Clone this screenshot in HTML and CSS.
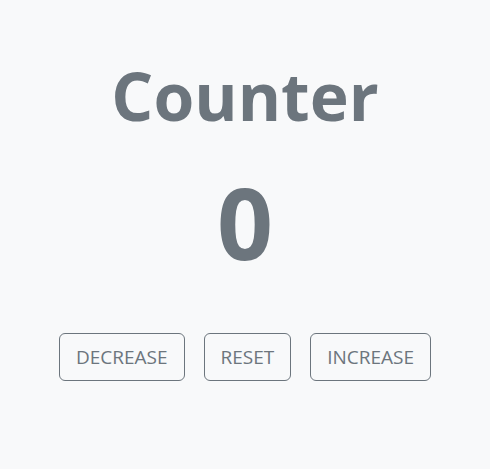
FILE: index.html
```html
<!DOCTYPE html>
<html>
<head>
<meta charset="utf-8">
<link rel="stylesheet" href="styles.css">
</head>
<body>
<main class="counter">
  <h1 class="title">Counter</h1>
  <div class="value">0</div>
  <div class="actions">
    <button class="btn">DECREASE</button>
    <button class="btn">RESET</button>
    <button class="btn">INCREASE</button>
  </div>
</main>
</body>
</html>
```
FILE: styles.css
```css
html, body {
  margin: 0;
  padding: 0;
  background: #f8f9fa;
  height: 100%;
}
body {
  font-family: "Open Sans", "Noto Sans", sans-serif;
  color: #6c757d;
}
.counter {
  display: flex;
  flex-direction: column;
  align-items: center;
  padding-top: 55px;
}
.title {
  margin: 0;
  font-size: 66px;
  font-weight: 700;
  line-height: 80px;
}
.value {
  margin-top: 27px;
  font-size: 98px;
  font-weight: 700;
  line-height: 120px;
}
.actions {
  display: flex;
  gap: 19px;
  margin-top: 51px;
}
.btn {
  font-family: inherit;
  font-size: 19px;
  line-height: 28px;
  padding: 9px 16px;
  color: #6c757d;
  background: transparent;
  border: 1px solid #6c757d;
  border-radius: 6px;
}
```
